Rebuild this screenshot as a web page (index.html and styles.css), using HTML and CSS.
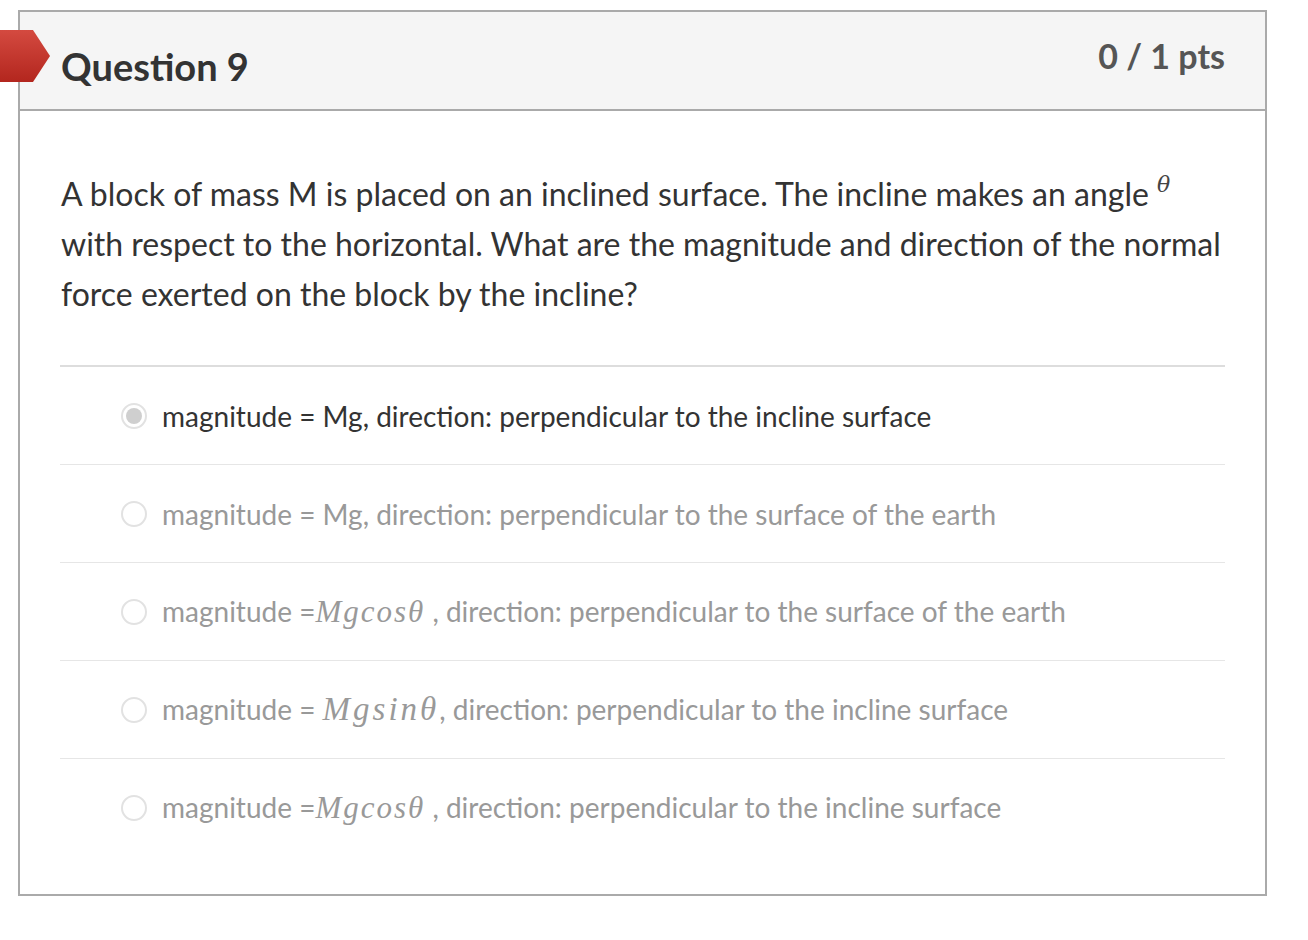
FILE: index.html
```html
<!DOCTYPE html>
<html>
<head>
<meta charset="utf-8">
<link rel="stylesheet" href="styles.css">
</head>
<body>
<div class="flag"></div>
<div class="card">
  <div class="header">
    <h2 class="title">Question 9</h2>
    <div class="pts">0 / 1 pts</div>
  </div>
  <div class="content">
    <p class="qtext">A block of mass M is placed on an inclined surface. The incline makes an angle <span class="sup-theta">θ</span> with respect to the horizontal. What are the magnitude and direction of the normal force exerted on the block by the incline?</p>
    <div class="answers">
      <div class="answer selected"><span class="radio"></span><span class="atext">magnitude = Mg, direction: perpendicular to the incline surface</span></div>
      <div class="answer"><span class="radio"></span><span class="atext">magnitude = Mg, direction: perpendicular to the surface of the earth</span></div>
      <div class="answer"><span class="radio"></span><span class="atext">magnitude =<span class="math">Mgcosθ</span> , direction: perpendicular to the surface of the earth</span></div>
      <div class="answer"><span class="radio"></span><span class="atext">magnitude = <span class="math math-lg">Mgsinθ</span>, direction: perpendicular to the incline surface</span></div>
      <div class="answer last"><span class="radio"></span><span class="atext">magnitude =<span class="math">Mgcosθ</span> , direction: perpendicular to the incline surface</span></div>
    </div>
  </div>
</div>
</body>
</html>
```
FILE: styles.css
```css
html, body {
  margin: 0;
  padding: 0;
  background: #fff;
}
body {
  padding: 10px 0 0 18px;
  font-family: Lato, "Open Sans", sans-serif;
  color: #333;
  position: relative;
}
.flag {
  position: absolute;
  left: 0;
  top: 30px;
  width: 50px;
  height: 52px;
  background: linear-gradient(#d44a40, #b3261e);
  clip-path: polygon(0 0, 66% 0, 100% 50%, 66% 100%, 0 100%);
  z-index: 2;
}
.card {
  width: 1245px;
  border: 2px solid #aaa;
  box-sizing: content-box;
}
.header {
  background: #f5f5f5;
  border-bottom: 2px solid #aaa;
  height: 97px;
  display: flex;
  justify-content: space-between;
  padding: 0 40px 0 41px;
}
.title {
  margin: 0;
  font-size: 38px;
  font-weight: 700;
  color: #333;
  padding-top: 32px;
  line-height: 44px;
}
.pts {
  font-size: 34px;
  font-weight: 700;
  color: #555;
  padding-top: 23px;
  line-height: 42px;
}
.content {
  padding: 0 40px 38px 40px;
}
.qtext {
  margin: 0;
  padding: 58px 0 46px 1px;
  font-size: 32px;
  line-height: 50px;
  color: #333;
}
.sup-theta {
  font-family: "DejaVu Serif", serif;
  font-style: italic;
  font-size: 22px;
  color: #444;
  vertical-align: 14px;
  line-height: 0;
}
.answers {
  border-top: 2px solid #ddd;
}
.answer {
  display: flex;
  align-items: center;
  height: 97px;
  border-bottom: 1px solid #e6e6e6;
  padding-left: 61px;
  color: #999;
  font-size: 28px;
}
.answer.last {
  border-bottom: none;
}
.answer.selected {
  color: #333;
}
.radio {
  width: 22px;
  height: 22px;
  border: 2px solid #e2e2e2;
  border-radius: 50%;
  background: #fff;
  box-sizing: content-box;
  flex: none;
  position: relative;
  margin-right: 15px;
}
.answer.selected .radio::after {
  content: "";
  position: absolute;
  left: 3px;
  top: 3px;
  width: 16px;
  height: 16px;
  border-radius: 50%;
  background: #cfcfcf;
}
.math {
  font-family: "Liberation Serif", "DejaVu Serif", serif;
  font-style: italic;
  font-size: 31px;
  color: #999;
  letter-spacing: 2px;
}
.math-lg {
  font-size: 33px;
  letter-spacing: 3px;
}
```
